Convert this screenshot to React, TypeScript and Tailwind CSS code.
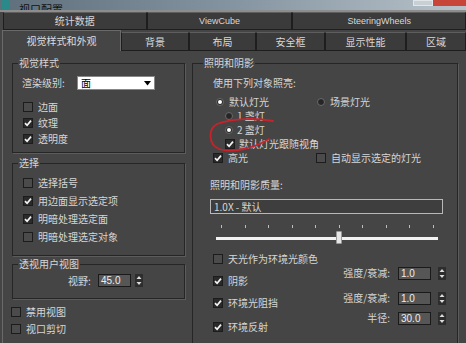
import React from "react";

function Check({ on }: { on?: boolean }) {
  return (
    <span
      className={
        "w-[10px] h-[10px] border border-[#1c1c1c] flex items-center justify-center shrink-0 " +
        (on ? "bg-[#2a2a2a]" : "bg-[#4b4b4b]")
      }
    >
      {on && (
        <svg width="8" height="8" viewBox="0 0 8 8">
          <path d="M1 4.2 L3.1 6.3 L7 1.6" stroke="#f4f4f4" strokeWidth="1.7" fill="none" />
        </svg>
      )}
    </span>
  );
}

function Radio({ on }: { on?: boolean }) {
  return (
    <span className="w-[8px] h-[8px] rounded-full bg-[#262626] border border-[#6a6a6a] flex items-center justify-center shrink-0">
      {on && <span className="w-[4px] h-[4px] rounded-full bg-white" />}
    </span>
  );
}

function Spinner() {
  return (
    <svg width="8" height="13" viewBox="0 0 8 13" className="shrink-0">
      <rect x="0" y="0" width="8" height="13" fill="#2d2d2d" />
      <path d="M4 2 L6.5 5 L1.5 5 Z" fill="#dcdcdc" />
      <path d="M4 11 L6.5 8 L1.5 8 Z" fill="#dcdcdc" />
    </svg>
  );
}

function NumBox({ value }: { value: string }) {
  return (
    <span className="w-[33px] h-[13px] bg-[#565656] border border-[#1a1a1a] text-[#eeeeee] text-[10px] leading-[11px] pl-[2px] font-['Liberation_Sans',sans-serif]">
      {value}
    </span>
  );
}

const tabTop = [
  { label: "统计数据", w: "w-[144px]" },
  { label: "ViewCube", w: "w-[146px]" },
  { label: "SteeringWheels", w: "w-[174px]" },
];

const tabBottom = [
  { label: "背景", w: "w-[68px]" },
  { label: "布局", w: "w-[67px]" },
  { label: "安全框", w: "w-[69px]" },
  { label: "显示性能", w: "w-[81px]" },
  { label: "区域", w: "w-[60px]" },
];

export default function App() {
  return (
    <div className="w-[466px] h-[343px] bg-[#454545] overflow-hidden relative text-[10px] leading-[12px] text-[#d6d6d6] font-['Noto_Sans_CJK_SC','Noto_Sans',sans-serif]">
      {/* title bar, mostly cut off */}
      <div className="h-[10px] flex items-end bg-gradient-to-r from-[#5f707c] via-[#8494a0] to-[#b9c3ca] overflow-hidden">
        <span className="w-[9px] h-[9px] ml-[1px] bg-[#2a8a8a] rounded-[2px] self-start" />
        <span className="ml-[9px] text-[11px] leading-[12px] text-[#111] mb-[-5px]">视口配置</span>
        <div className="ml-auto flex self-start h-[6px]">
          <span className="w-[20px] h-[6px] border border-[#e0e6ea] bg-[#c8d0d6]" />
          <span className="w-[33px] h-[6px] bg-[#c8453a]" />
        </div>
      </div>
      <div className="h-[2px] bg-[#8d8d8d]" />

      {/* tab row 1 */}
      <div className="flex h-[18px] pl-[3px]">
        {tabTop.map((t) => (
          <div
            key={t.label}
            className={
              t.w +
              " h-[18px] bg-[#3b3b3b] border border-[#1e1e1e] border-t-[#5e5e5e] flex items-center justify-center text-[#d8d8d8]"
            }
          >
            {t.label === "统计数据" ? (
              <span className="text-[10px]">{t.label}</span>
            ) : (
              <span className="text-[9px] font-['Liberation_Sans',sans-serif]">{t.label}</span>
            )}
          </div>
        ))}
      </div>

      {/* tab row 2 */}
      <div className="flex h-[21px] pl-[2px] items-end">
        <div className="w-[119px] h-[21px] bg-[#454545] border-l border-t border-r border-[#6a6a6a] flex items-center justify-center text-[10px] text-[#dddddd]">
          视觉样式和外观
        </div>
        {tabBottom.map((t) => (
          <div
            key={t.label}
            className={
              t.w +
              " h-[19px] bg-[#3b3b3b] border border-[#1e1e1e] border-t-[#5e5e5e] flex items-center justify-center text-[10px] text-[#d8d8d8]"
            }
          >
            {t.label}
          </div>
        ))}
      </div>

      {/* panel */}
      <div className="ml-[2px] h-[300px] border-l border-[#6a6a6a] flex items-start pt-[6px] pl-[9px] relative">
        {/* left column */}
        <div className="w-[173px] flex flex-col">
          <fieldset className="h-[96px] border border-[#262626] shadow-[1px_1px_0_#5c5c5c]">
            <legend className="ml-[5px] px-[1px] leading-[12px]">视觉样式</legend>
            <div className="flex items-center mt-[7px] h-[14px] pl-[9px]">
              <span className="w-[55px]">渲染级别:</span>
              <div className="w-[78px] h-[14px] bg-white border border-[#888] flex items-center justify-between px-[3px] text-black">
                <span>面</span>
                <svg width="7" height="5" viewBox="0 0 7 5">
                  <path d="M0 0 L7 0 L3.5 4.5 Z" fill="#000" />
                </svg>
              </div>
            </div>
            <div className="flex flex-col mt-[9px] pl-[10px]">
              {[
                ["边面", false],
                ["纹理", true],
                ["透明度", true],
              ].map(([l, on]) => (
                <div key={l as string} className="flex items-center gap-[5px] h-[16px]">
                  <Check on={on as boolean} />
                  <span>{l}</span>
                </div>
              ))}
            </div>
          </fieldset>

          <fieldset className="mt-[4px] h-[99px] border border-[#262626] shadow-[1px_1px_0_#5c5c5c]">
            <legend className="ml-[5px] px-[1px] leading-[12px]">选择</legend>
            <div className="flex flex-col mt-[5px] pl-[10px]">
              {[
                ["选择括号", false],
                ["用边面显示选定项", true],
                ["明暗处理选定面", true],
                ["明暗处理选定对象", false],
              ].map(([l, on]) => (
                <div key={l as string} className="flex items-center gap-[5px] h-[18px]">
                  <Check on={on as boolean} />
                  <span>{l}</span>
                </div>
              ))}
            </div>
          </fieldset>

          <fieldset className="mt-[2px] h-[41px] border border-[#262626] shadow-[1px_1px_0_#5c5c5c]">
            <legend className="ml-[5px] px-[1px] leading-[12px]">透视用户视图</legend>
            <div className="flex items-center mt-[4px] h-[13px] pl-[55px]">
              <span className="w-[30px]">视野:</span>
              <NumBox value="45.0" />
              <span className="w-[4px]" />
              <Spinner />
            </div>
          </fieldset>

          <div className="flex flex-col mt-[4px] -ml-[1px]">
            {["禁用视图", "视口剪切"].map((l) => (
              <div key={l} className="flex items-center gap-[5px] h-[17px]">
                <Check />
                <span>{l}</span>
              </div>
            ))}
          </div>
        </div>

        {/* right group */}
        <fieldset className="ml-[7px] w-[266px] h-[320px] border border-[#262626] shadow-[1px_1px_0_#5c5c5c]">
          <legend className="ml-[10px] px-[1px] leading-[12px]">照明和阴影</legend>
          <div className="mt-[8px] h-[12px] pl-[20px]">使用下列对象照亮:</div>

          <div className="mt-[6px] flex items-center h-[14px] pl-[23px]">
            <div className="flex items-center gap-[5px] w-[101px]">
              <Radio on />
              <span>默认灯光</span>
            </div>
            <div className="flex items-center gap-[5px]">
              <Radio />
              <span>场景灯光</span>
            </div>
          </div>
          <div className="flex items-center gap-[4px] h-[14px] pl-[32px]">
            <Radio />
            <span>1 盏灯</span>
          </div>
          <div className="flex items-center gap-[4px] h-[14px] pl-[32px]">
            <Radio on />
            <span>2 盏灯</span>
          </div>
          <div className="flex items-center gap-[4px] h-[14px] pl-[32px]">
            <Check on />
            <span>默认灯光跟随视角</span>
          </div>
          <div className="flex items-center h-[14px] pl-[20px]">
            <div className="flex items-center gap-[5px] w-[103px]">
              <Check on />
              <span>高光</span>
            </div>
            <div className="flex items-center gap-[5px]">
              <Check />
              <span>自动显示选定的灯光</span>
            </div>
          </div>

          <div className="mt-[14px] h-[12px] pl-[17px]">照明和阴影质量:</div>
          <div className="mt-[8px] ml-[17px] w-[233px] h-[15px] bg-[#3e3e3e] border border-[#b8b8b8] flex items-center pl-[3px]">
            1.0X - 默认
          </div>

          {/* slider */}
          <div className="mt-[11px] ml-[28px] w-[213px] flex justify-between">
            {Array.from({ length: 10 }).map((_, i) => (
              <span key={i} className="w-[1px] h-[3px] bg-[#bdbdbd]" />
            ))}
          </div>
          <div className="mt-[3px] ml-[23px] w-[222px] h-[14px] flex items-center relative">
            <div className="w-full h-[3px] bg-[#f2f2f2]" />
            <span className="absolute left-[120px] top-0 w-[6px] h-[13px] bg-[#e6e6e6] border border-[#9a9a9a] rounded-[1px]" />
          </div>

          {/* bottom options */}
          <div className="mt-[6px] flex pl-[20px] pr-[11px]">
            <div className="flex flex-col">
              <div className="flex items-center gap-[5px] h-[16px]">
                <Check />
                <span>天光作为环境光颜色</span>
              </div>
              <div className="flex items-center gap-[5px] h-[16px] mt-[6px]">
                <Check on />
                <span>阴影</span>
              </div>
              <div className="flex items-center gap-[5px] h-[16px] mt-[6px]">
                <Check on />
                <span>环境光阻挡</span>
              </div>
              <div className="flex items-center gap-[5px] h-[16px] mt-[8px]">
                <Check on />
                <span>环境反射</span>
              </div>
            </div>
            <div className="ml-auto flex flex-col items-end">
              <div className="mt-[15px] flex items-center h-[14px]">
                <span className="mr-[8px]">强度/衰减:</span>
                <NumBox value="1.0" />
                <span className="w-[7px]" />
                <Spinner />
              </div>
              <div className="mt-[11px] flex items-center h-[14px]">
                <span className="mr-[8px]">强度/衰减:</span>
                <NumBox value="1.0" />
                <span className="w-[7px]" />
                <Spinner />
              </div>
              <div className="mt-[6px] flex items-center h-[14px]">
                <span className="mr-[8px]">半径:</span>
                <NumBox value="30.0" />
                <span className="w-[7px]" />
                <Spinner />
              </div>
            </div>
          </div>
        </fieldset>
      </div>

      {/* hand-drawn red annotation around "2 盏灯" */}
      <svg className="absolute left-[205px] top-[117px]" width="75" height="38" viewBox="0 0 75 38">
        <path
          d="M68 4 C52 1, 28 1, 12 7 C3 12, 3 27, 14 32 C26 36, 48 32, 64 22"
          stroke="#c8222a"
          strokeWidth="1.8"
          fill="none"
          strokeLinecap="round"
        />
      </svg>
    </div>
  );
}
